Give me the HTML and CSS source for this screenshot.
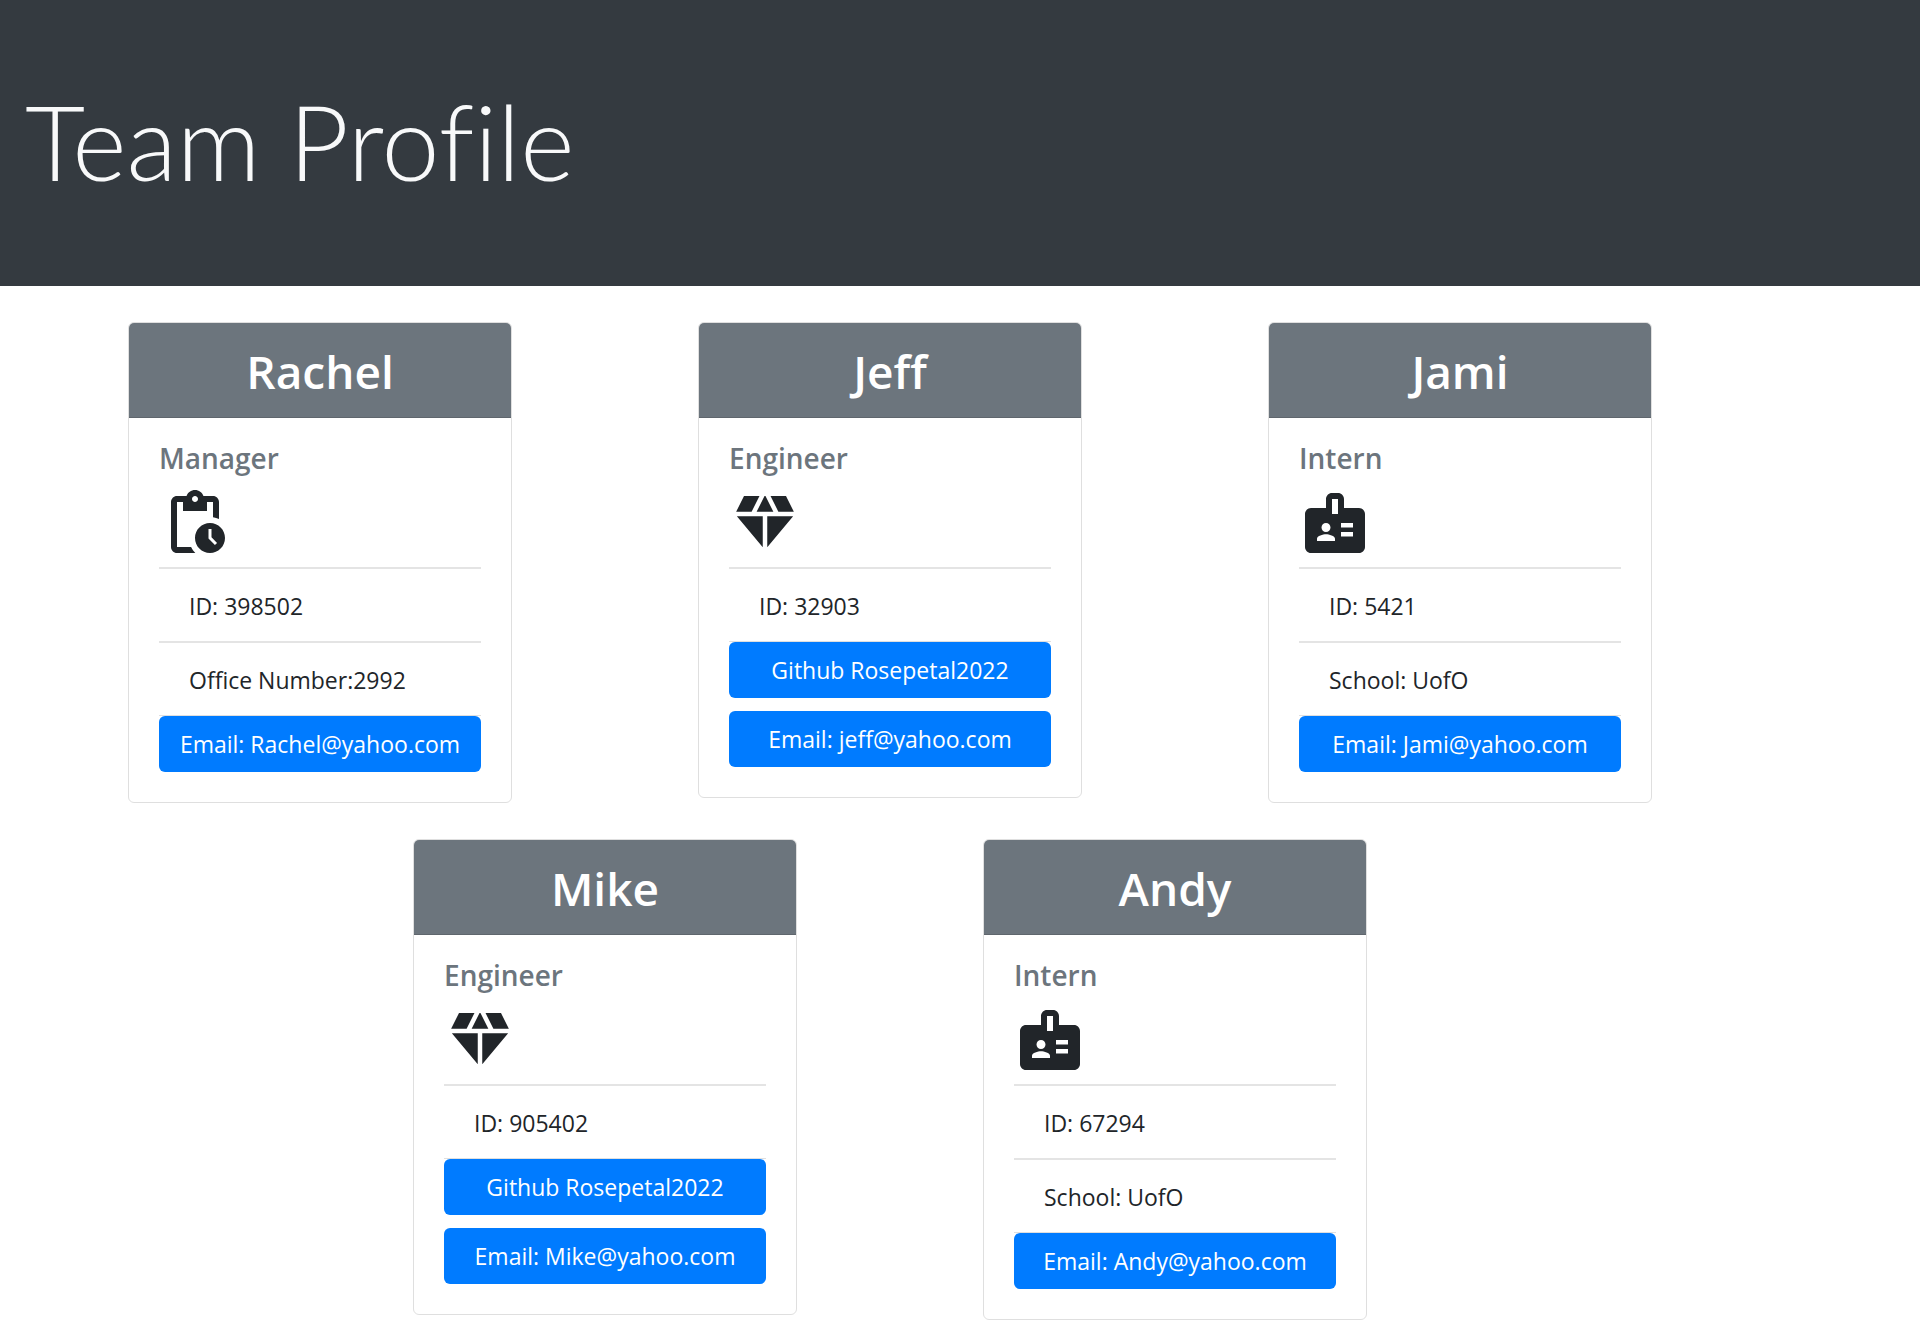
FILE: index.html
```html
<!DOCTYPE html>
<html lang="en">
<head>
  <meta charset="utf-8">
  <meta name="viewport" content="width=device-width, initial-scale=1">
  <title>Team Profile</title>
  <link rel="stylesheet" href="styles.css">
</head>
<body>
  <svg class="sprite" aria-hidden="true">
    <symbol id="icon-manager" viewBox="0 0 24 24"><path d="M17,12c-2.76,0-5,2.24-5,5s2.24,5,5,5c2.76,0,5-2.24,5-5S19.76,12,17,12z M18.65,19.35l-2.15-2.15V14h1v2.79l1.85,1.85L18.65,19.35z M18,3h-3.18C14.4,1.84,13.3,1,12,1S9.6,1.84,9.18,3H6C4.9,3,4,3.9,4,5v15c0,1.1,0.9,2,2,2h6.11c-0.59-0.57-1.07-1.25-1.42-2H6V5h2v3h8V5h2v5.08c0.71,0.1,1.38,0.31,2,0.6V5C20,3.9,19.1,3,18,3z M12,5c-0.55,0-1-0.45-1-1c0-0.55,0.45-1,1-1c0.55,0,1,0.45,1,1C13,4.55,12.55,5,12,5z"/></symbol>
    <symbol id="icon-engineer" viewBox="0 0 24 24"><path d="M12.16 3h-.32L9.21 8.25h5.58zM16.46 8.25h5.16L19 3h-5.16zM21.38 9.75h-8.63V20.1zM11.25 20.1V9.75H2.62zM7.54 8.25L10.16 3H5L2.38 8.25z"/></symbol>
    <symbol id="icon-intern" viewBox="0 0 24 24"><path d="M20,7h-5V4c0-1.1-0.9-2-2-2h-2C9.9,2,9,2.9,9,4v3H4C2.9,7,2,7.9,2,9v11c0,1.1,0.9,2,2,2h16c1.1,0,2-0.9,2-2V9C22,7.9,21.1,7,20,7z M9,12c0.83,0,1.5,0.67,1.5,1.5S9.83,15,9,15s-1.5-0.67-1.5-1.5S8.17,12,9,12z M12,18H6v-0.75c0-1,2-1.5,3-1.5s3,0.5,3,1.5V18z M13,9h-2V4h2V9z M18,16.5h-4V15h4V16.5z M18,13.5h-4V12h4V13.5z"/></symbol>
  </svg>

  <header class="banner">
    <h1 class="banner-title">Team Profile</h1>
  </header>

  <main class="team">
    <article class="card">
      <h2 class="card-name">Rachel</h2>
      <div class="card-body">
        <h3 class="card-role">Manager</h3>
        <svg class="card-icon" aria-hidden="true"><use href="#icon-manager"/></svg>
        <ul class="facts">
          <li class="fact">ID: 398502</li>
          <li class="fact">Office Number:2992</li>
        </ul>
        <div class="actions">
          <a class="btn" href="mailto:Rachel@yahoo.com">Email: Rachel@yahoo.com</a>
        </div>
      </div>
    </article>

    <article class="card">
      <h2 class="card-name">Jeff</h2>
      <div class="card-body">
        <h3 class="card-role">Engineer</h3>
        <svg class="card-icon" aria-hidden="true"><use href="#icon-engineer"/></svg>
        <ul class="facts">
          <li class="fact">ID: 32903</li>
        </ul>
        <div class="actions">
          <a class="btn" href="https://github.com/Rosepetal2022">Github Rosepetal2022</a>
          <a class="btn" href="mailto:jeff@yahoo.com">Email: jeff@yahoo.com</a>
        </div>
      </div>
    </article>

    <article class="card">
      <h2 class="card-name">Jami</h2>
      <div class="card-body">
        <h3 class="card-role">Intern</h3>
        <svg class="card-icon" aria-hidden="true"><use href="#icon-intern"/></svg>
        <ul class="facts">
          <li class="fact">ID: 5421</li>
          <li class="fact">School: UofO</li>
        </ul>
        <div class="actions">
          <a class="btn" href="mailto:Jami@yahoo.com">Email: Jami@yahoo.com</a>
        </div>
      </div>
    </article>

    <article class="card">
      <h2 class="card-name">Mike</h2>
      <div class="card-body">
        <h3 class="card-role">Engineer</h3>
        <svg class="card-icon" aria-hidden="true"><use href="#icon-engineer"/></svg>
        <ul class="facts">
          <li class="fact">ID: 905402</li>
        </ul>
        <div class="actions">
          <a class="btn" href="https://github.com/Rosepetal2022">Github Rosepetal2022</a>
          <a class="btn" href="mailto:Mike@yahoo.com">Email: Mike@yahoo.com</a>
        </div>
      </div>
    </article>

    <article class="card">
      <h2 class="card-name">Andy</h2>
      <div class="card-body">
        <h3 class="card-role">Intern</h3>
        <svg class="card-icon" aria-hidden="true"><use href="#icon-intern"/></svg>
        <ul class="facts">
          <li class="fact">ID: 67294</li>
          <li class="fact">School: UofO</li>
        </ul>
        <div class="actions">
          <a class="btn" href="mailto:Andy@yahoo.com">Email: Andy@yahoo.com</a>
        </div>
      </div>
    </article>
  </main>
</body>
</html>
```

FILE: styles.css
```css
* {
  box-sizing: border-box;
}

body {
  margin: 0;
  background: #fff;
  color: #212529;
  font-family: "Segoe UI", "Open Sans", "Noto Sans", sans-serif;
  font-size: 23px;
  line-height: 36px;
}

h1,
h2,
h3,
ul {
  margin: 0;
  padding: 0;
}

.sprite {
  display: none;
}

.banner {
  padding: 69px 25px 73px;
  background: #343a40;
  color: #f8f9fa;
}

.banner-title {
  font-family: "Segoe UI", Lato, "Open Sans", sans-serif;
  font-size: 104px;
  font-weight: 300;
  font-variant-ligatures: none;
  line-height: 144px;
}

.team {
  display: flex;
  flex-wrap: wrap;
  justify-content: center;
  align-items: flex-start;
  gap: 36px 186px;
  padding: 36px 140px 0 0;
}

.card {
  width: 384px;
  border: 1px solid #dfdfdf;
  border-radius: 6px;
  overflow: hidden;
}

.card-name {
  padding: 19px 30px 17px;
  border-bottom: 1px solid #5f666d;
  background: #6c757d;
  color: #fff;
  font-size: 46px;
  font-weight: 600;
  line-height: 58px;
  text-align: center;
}

.card-body {
  padding: 22px 30px 30px;
}

.card-role {
  margin-bottom: 11px;
  color: #6c757d;
  font-size: 28px;
  font-weight: 600;
  line-height: 36px;
}

.card-icon {
  display: block;
  width: 72px;
  height: 72px;
  margin-bottom: 8px;
  fill: #212529;
}

.facts {
  border-bottom: 1px solid #dfdfdf;
  list-style: none;
}

.fact {
  padding: 19px 30px 17px;
  border-top: 2px solid #e4e4e4;
}

.actions {
  display: grid;
  gap: 13px;
}

.btn {
  padding: 10px 12px;
  border-radius: 6px;
  background: #007bff;
  color: #fff;
  text-align: center;
  text-decoration: none;
  white-space: nowrap;
}
```
